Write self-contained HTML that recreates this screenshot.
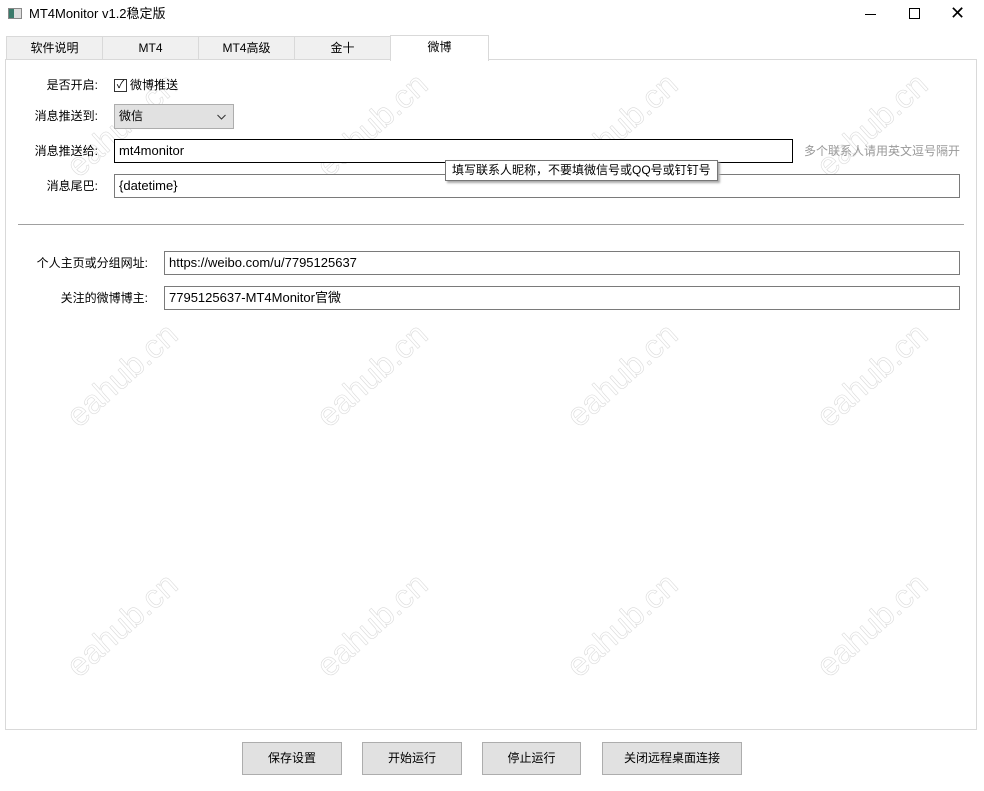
<!DOCTYPE html>
<html><head><meta charset="utf-8">
<style>
*{box-sizing:border-box;margin:0;padding:0}
body{width:984px;height:791px;background:#fff;position:relative;overflow:hidden;font-family:"Liberation Sans","Noto Sans CJK SC",sans-serif;font-size:12px;color:#000}
.a{position:absolute}
.tab{position:absolute;top:36px;height:23px;background:#f0f0f0;border:1px solid #d9d9d9;border-bottom:none;text-align:center;line-height:22px;font-size:12px}
.lbl{position:absolute;text-align:right;font-size:12px;line-height:16px}
.inp{position:absolute;border:1px solid #7a7a7a;background:#fff;padding-left:4px;line-height:22px;font-size:13px;height:24px}
.btn{position:absolute;top:742px;height:33px;background:#e1e1e1;border:1px solid #adadad;text-align:center;line-height:31px;font-size:12px}
.wm{position:absolute;font-size:33px;font-family:"Liberation Sans",sans-serif;color:transparent;-webkit-text-stroke:0.6px #dcdcdc;transform:translate(-50%,-50%) rotate(-42deg);white-space:nowrap}
</style></head><body>
<div class="a" style="left:8px;top:8px;width:14px;height:11px;border:1px solid #888;background:#ddd"><div style="width:5px;height:9px;background:#3a7a6a"></div></div>
<div class="a" style="left:29px;top:6px;font-size:13px;line-height:16px">MT4Monitor v1.2稳定版</div>
<div class="a" style="left:865px;top:14px;width:11px;height:1px;background:#000"></div>
<div class="a" style="left:909px;top:8px;width:11px;height:11px;border:1px solid #000"></div>
<div class="a" style="left:950px;top:2px;font-size:18px;font-weight:200;line-height:22px">✕</div>
<div class="tab" style="left:6px;width:97px">软件说明</div>
<div class="tab" style="left:102px;width:97px">MT4</div>
<div class="tab" style="left:198px;width:97px">MT4高级</div>
<div class="tab" style="left:294px;width:97px">金十</div>
<div class="a" style="left:5px;top:59px;width:972px;height:671px;border:1px solid #d9d9d9;background:#fff"></div>
<div class="tab" style="left:390px;top:35px;width:99px;height:26px;background:#fff;z-index:2;line-height:22px">微博</div>
<div class="wm" style="left:122px;top:125px">eahub.cn</div>
<div class="wm" style="left:372px;top:125px">eahub.cn</div>
<div class="wm" style="left:622px;top:125px">eahub.cn</div>
<div class="wm" style="left:872px;top:125px">eahub.cn</div>
<div class="wm" style="left:122px;top:375px">eahub.cn</div>
<div class="wm" style="left:372px;top:375px">eahub.cn</div>
<div class="wm" style="left:622px;top:375px">eahub.cn</div>
<div class="wm" style="left:872px;top:375px">eahub.cn</div>
<div class="wm" style="left:122px;top:625px">eahub.cn</div>
<div class="wm" style="left:372px;top:625px">eahub.cn</div>
<div class="wm" style="left:622px;top:625px">eahub.cn</div>
<div class="wm" style="left:872px;top:625px">eahub.cn</div>
<div class="lbl" style="left:10px;width:88px;top:77px">是否开启:</div>
<div class="a" style="left:114px;top:79px;width:13px;height:13px;border:1px solid #333;background:#fff;font-size:11px;line-height:11px;text-align:center">✓</div>
<div class="a" style="left:130px;top:77px;line-height:16px">微博推送</div>
<div class="lbl" style="left:10px;width:88px;top:108px">消息推送到:</div>
<div class="a" style="left:114px;top:104px;width:120px;height:25px;background:#e1e1e1;border:1px solid #adadad;padding-left:4px;line-height:23px">微信<svg style="position:absolute;right:7px;top:9px" width="9" height="6"><path d="M0.5 1 L4.5 5 L8.5 1" fill="none" stroke="#333" stroke-width="1"/></svg></div>
<div class="lbl" style="left:10px;width:88px;top:143px">消息推送给:</div>
<div class="inp" style="left:114px;top:139px;width:679px;border-color:#000">mt4monitor</div>
<div class="a" style="left:804px;top:143px;color:#999;line-height:16px">多个联系人请用英文逗号隔开</div>
<div class="lbl" style="left:10px;width:88px;top:178px">消息尾巴:</div>
<div class="inp" style="left:114px;top:174px;width:846px">{datetime}</div>
<div class="a" style="left:445px;top:160px;width:273px;height:21px;background:#fff;border:1px solid #767676;box-shadow:2px 2px 2px #aaa;padding-left:6px;line-height:19px;z-index:3">填写联系人昵称，不要填微信号或QQ号或钉钉号</div>
<div class="a" style="left:18px;top:224px;width:946px;height:1px;background:#a0a0a0"></div>
<div class="lbl" style="left:10px;width:138px;top:255px">个人主页或分组网址:</div>
<div class="inp" style="left:164px;top:251px;width:796px">https://weibo.com/u/7795125637</div>
<div class="lbl" style="left:10px;width:138px;top:290px">关注的微博博主:</div>
<div class="inp" style="left:164px;top:286px;width:796px">7795125637-MT4Monitor官微</div>
<div class="btn" style="left:242px;width:100px">保存设置</div>
<div class="btn" style="left:362px;width:100px">开始运行</div>
<div class="btn" style="left:482px;width:99px">停止运行</div>
<div class="btn" style="left:602px;width:140px">关闭远程桌面连接</div>
</body></html>
